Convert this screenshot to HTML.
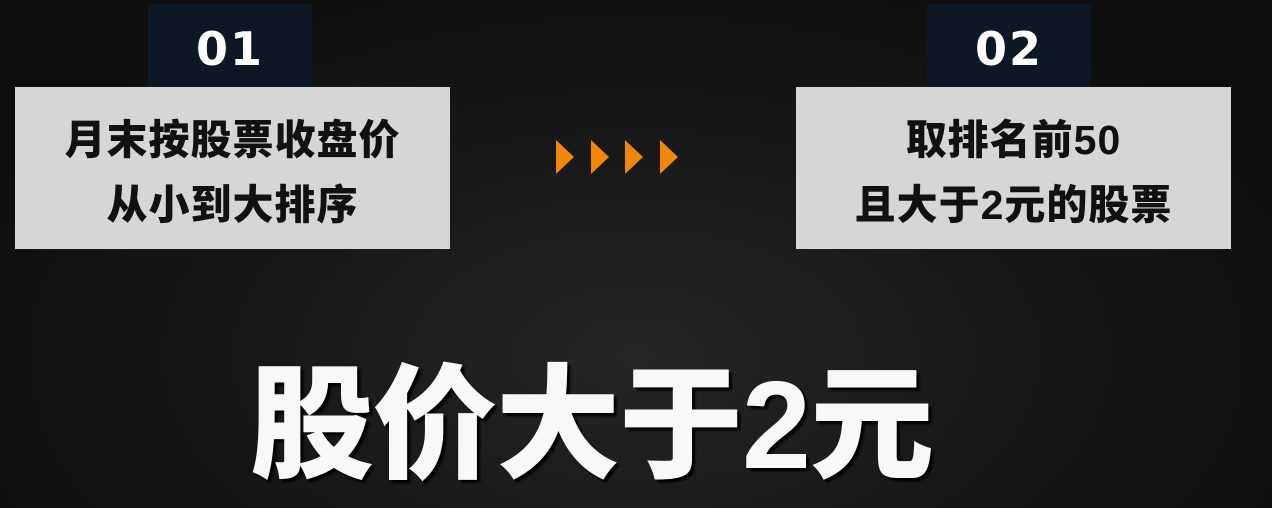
<!DOCTYPE html><html><head><meta charset="utf-8"><style>
body{margin:0;width:1272px;height:508px;overflow:hidden;background:radial-gradient(ellipse at 50% 70%,#262626 0%,#1a1a1a 35%,#0e0e0e 80%);font-family:"Liberation Sans","Noto Sans CJK SC",sans-serif;position:relative}
.tab{position:absolute;top:4px;width:164px;height:83px;background:#0e1724;color:#fff;font:bold 46px "DejaVu Sans",sans-serif;text-align:center;line-height:90px;letter-spacing:2px}
.box{position:absolute;top:87px;width:435px;height:162px;background:#d6d6d6;color:#111;font-weight:900;font-size:41px;text-align:center;line-height:65px;box-sizing:border-box;padding-top:21px;letter-spacing:1px}
.big{position:absolute;left:250px;top:356px;color:#f8f8f8;font-weight:900;font-size:124px;line-height:140px;letter-spacing:-1px;text-shadow:3px 3px 2px #000}
.arr{position:absolute;top:140px;width:0;height:0;border-top:17px solid transparent;border-bottom:17px solid transparent;border-left:18px solid #f0860a}
</style></head><body>
<div class="tab" style="left:148px">01</div>
<div class="box" style="left:15px">月末按股票收盘价<br>从小到大排序</div>
<div class="tab" style="left:927px">02</div>
<div class="box" style="left:796px">取排名前50<br>且大于2元的股票</div>
<div class="arr" style="left:556px"></div><div class="arr" style="left:591px"></div><div class="arr" style="left:625px"></div><div class="arr" style="left:660px"></div>
<div class="big">股价大于2元</div>
</body></html>
